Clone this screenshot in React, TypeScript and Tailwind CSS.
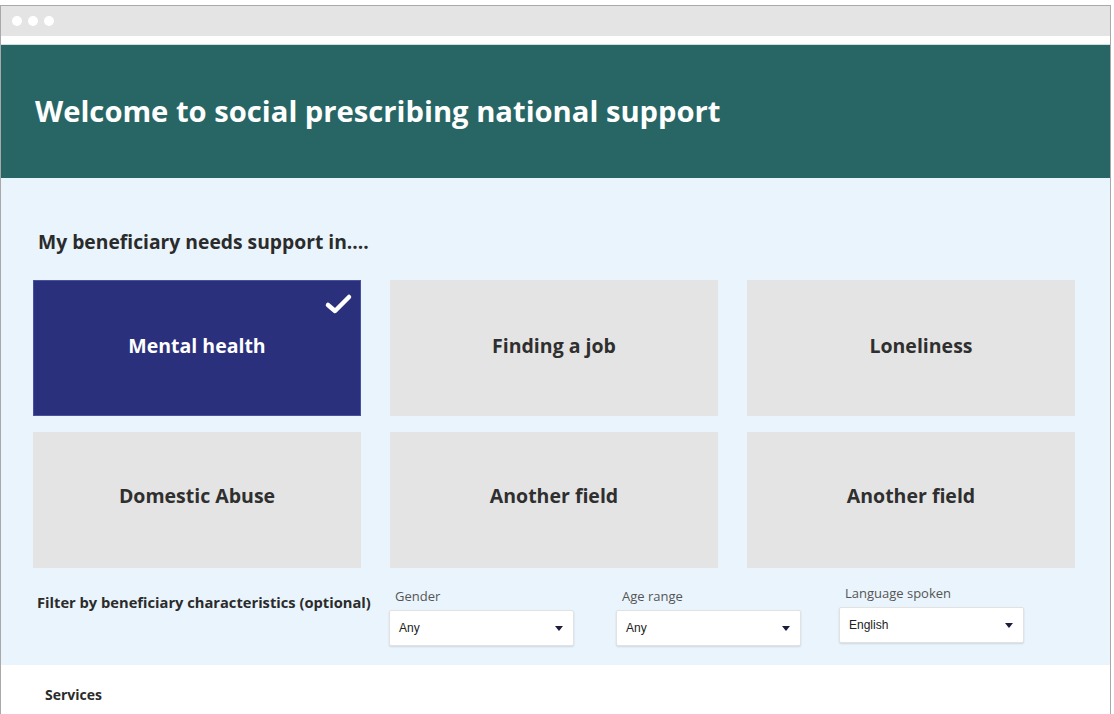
import React, { useState } from "react";

const areas = [
    "Mental health",
    "Finding a job",
    "Loneliness",
    "Domestic Abuse",
    "Another field",
    "Another field",
];

function Dropdown({ label, value, className }: { label: string; value: string; className?: string }) {
    return (
        <div className={"flex flex-col " + (className || "")}>
            <span className="text-[13px] leading-[16px] text-[#555] pl-[6px] mb-[6px]">{label}</span>
            <div className="w-[185px] h-[36px] bg-white border border-[#e2e2e2] rounded-[2px] shadow-[0_1px_2px_rgba(0,0,0,0.12)] flex items-center justify-between pl-[9px] pr-[10px]">
                <span className="text-[12px] text-[#222] font-['Liberation_Sans',Arial,sans-serif]">{value}</span>
                <svg width="8" height="5" viewBox="0 0 8 5">
                    <polygon points="0,0 8,0 4,5" fill="#1c1c3c" />
                </svg>
            </div>
        </div>
    );
}

export default function App() {
    const [selected, setSelected] = useState(0);

    return (
        <div className="min-h-screen bg-white pt-[5px] font-['Open_Sans',sans-serif]">
            <div className="w-[1111px] h-[709px] border-l border-t border-r border-[#a9a9a9] overflow-hidden flex flex-col">
                {/* fenêtre */}
                <div className="h-[30px] bg-[#e4e4e4] flex items-center gap-[6px] pl-[11px] shrink-0">
                    <span className="w-[10px] h-[10px] rounded-full bg-white"></span>
                    <span className="w-[10px] h-[10px] rounded-full bg-white"></span>
                    <span className="w-[10px] h-[10px] rounded-full bg-white"></span>
                </div>
                <div className="h-[8px] bg-white shrink-0"></div>
                <div className="h-[1px] bg-[#cfe0df] shrink-0"></div>

                {/* Header */}
                <header className="h-[133px] bg-[#286666] flex items-center pl-[34px] shrink-0">
                    <h1 className="text-[29.2px] font-bold text-white">
                        Welcome to social prescribing national support
                    </h1>
                </header>

                {/* Besoins */}
                <section className="bg-[#eaf4fd] h-[487px] shrink-0 pl-[32px] pt-[50px]">
                    <h2 className="text-[19.3px] font-bold text-[#2b2b2b] pl-[5px] leading-[28px]">
                        My beneficiary needs support in....
                    </h2>
                    <div className="grid grid-cols-[328px_328px_328px] auto-rows-[136px] gap-x-[29px] gap-y-[16px] mt-[24px]">
                        {areas.map((a, i) => (
                            <button
                                key={i}
                                onClick={() => setSelected(i)}
                                className={
                                    "relative flex items-center justify-center text-[19.5px] font-bold " +
                                    (i < 3 ? "pb-[4px] " : "pb-[8px] ") +
                                    (selected === i
                                        ? "bg-[#2b307d] text-white border border-[#4a50a0]"
                                        : "bg-[#e4e4e4] text-[#2f2f2f]")
                                }
                            >
                                {selected === i && (
                                    <svg
                                        className="absolute top-[11px] right-[7px]"
                                        width="30"
                                        height="24"
                                        viewBox="0 0 30 24"
                                    >
                                        <polyline
                                            points="5,13 12,19 26,5"
                                            fill="none"
                                            stroke="white"
                                            strokeWidth="4.5"
                                            strokeLinecap="round"
                                            strokeLinejoin="round"
                                        />
                                    </svg>
                                )}
                                <span className={i === 2 ? "ml-[20px]" : ""}>{a}</span>
                            </button>
                        ))}
                    </div>

                    {/* Filtres */}
                    <div className="flex items-start mt-[12px]">
                        <p className="text-[14.7px] font-bold text-[#2b2b2b] w-[356px] pl-[4px] pt-[11px] whitespace-nowrap">
                            Filter by beneficiary characteristics (optional)
                        </p>
                        <Dropdown label="Gender" value="Any" className="pt-[8px]" />
                        <Dropdown label="Age range" value="Any" className="ml-[42px] pt-[8px]" />
                        <Dropdown label="Language spoken" value="English" className="ml-[38px] pt-[5px]" />
                    </div>
                </section>

                {/* Services */}
                <section className="bg-white pl-[44px] pt-[19px]">
                    <h3 className="text-[14px] font-bold text-[#2b2b2b]">Services</h3>
                </section>
            </div>
        </div>
    );
}
